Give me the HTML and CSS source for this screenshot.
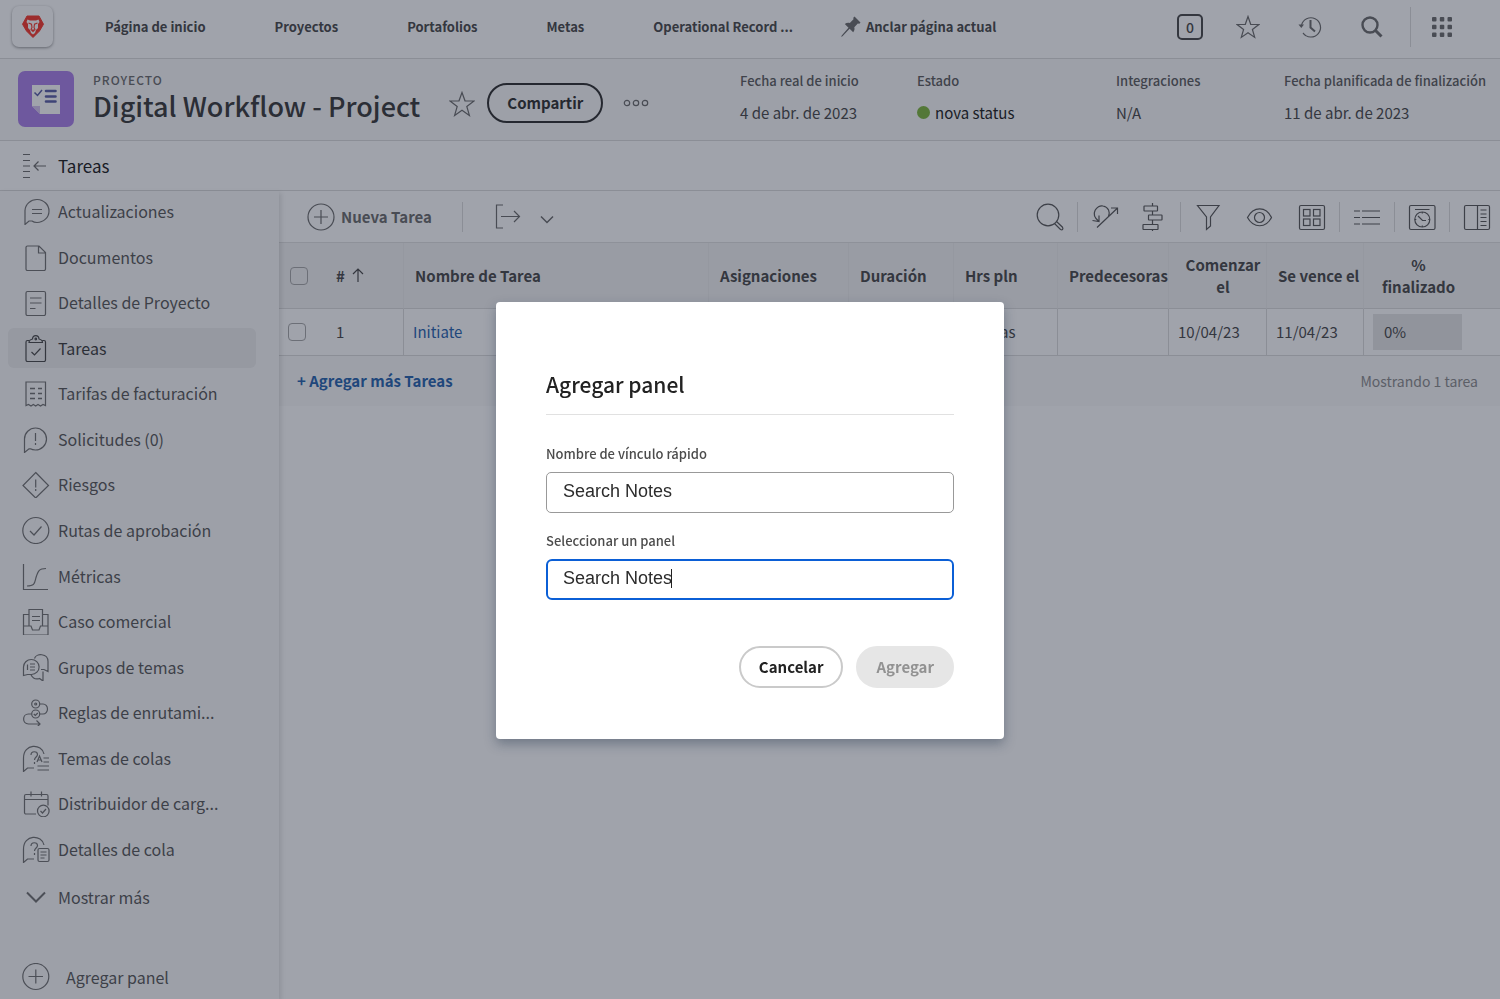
FILE: index.html
```html
<!DOCTYPE html>
<html lang="es">
<head>
<meta charset="utf-8">
<meta name="viewport" content="width=device-width, initial-scale=1">
<title>Digital Workflow - Project</title>
<link rel="stylesheet" href="styles.css">
</head>
<body>
<div class="app">
  <header class="topbar">
    <a class="brand" href="#" aria-label="Inicio">
      <svg width="24" height="25" viewBox="0 0 24 25"><path d="M6 2h12l4.500 8.200L18.500 17 12 23.500 5.500 17 1.500 10.200z" fill="#f93a2d" stroke="#f93a2d" stroke-linejoin="round"/><path d="M6.500 5.500 9 6.500h6l2.500-1 1 2.500-1.500 2v4l-2 2-1 3-2 1.500-2-1.500-1-3-2-2v-4L5.500 8z" fill="#fff"/><path d="M7.500 9l3 1.200.5 3.300-1 2M16.500 9l-3 1.200-.5 3.300 1 2M10.500 16h3l-1.500 1.500z" fill="none" stroke="#f93a2d" stroke-width="1.100"/></svg>
    </a>
    <nav class="mainnav">
      <a href="#">Página de inicio</a>
      <a href="#">Proyectos</a>
      <a href="#">Portafolios</a>
      <a href="#">Metas</a>
      <a href="#">Operational Record ...</a>
    </nav>
    <button class="pin" type="button">
      <svg width="20" height="22" viewBox="0 0 20 22"><path d="M13.500.5 19.500 6.500l-1.200 1.200-1.500-.3-3.500 3.800c.5 2 .2 3.500-1.100 5L8.600 12.800 1.500 20.300.2 21l.5-1.500L7.500 11.700 3.800 8c1.500-1.300 3.200-1.600 5-1.100l3.700-3.600-.2-1.500z" fill="currentColor"/></svg>
      <span>Anclar página actual</span>
    </button>
    <div class="tools">
      <button class="count" type="button">0</button>
      <button class="iconbtn" type="button" aria-label="Favoritos"><svg class="line" width="24" height="24" viewBox="0 0 24 24"><path d="M12 1.500l2.700 7.800 8.200.2-6.500 5 2.300 7.900L12 17.700l-6.700 4.700 2.300-7.900-6.500-5 8.200-.2z"/></svg></button>
      <button class="iconbtn" type="button" aria-label="Recientes"><svg class="line" width="24" height="24" viewBox="0 0 24 24"><path d="M3.500 10.500a9.600 9.600 0 1 1 1.600 7.500M5 18a9.600 9.600 0 0 0 3 2.800"/><path d="M.5 9.500h5.500l-2.700 3.500z" fill="currentColor" stroke="none"/><path d="M12.500 5v7.500l4.500 4" stroke-width="2"/></svg></button>
      <button class="iconbtn" type="button" aria-label="Buscar"><svg class="line" width="24" height="24" viewBox="0 0 24 24"><circle cx="10" cy="10" r="7.500" stroke-width="2.400"/><path d="M15.500 15.500l6 6" stroke-width="3"/></svg></button>
      <span class="split"></span>
      <button class="iconbtn" type="button" aria-label="Menú principal"><svg width="20" height="20" viewBox="0 0 20 20" fill="currentColor"><rect width="4.500" height="4.500" rx="1"/><rect x="7.800" width="4.500" height="4.500" rx="1"/><rect x="15.500" width="4.500" height="4.500" rx="1"/><rect y="7.800" width="4.500" height="4.500" rx="1"/><rect x="7.800" y="7.800" width="4.500" height="4.500" rx="1"/><rect x="15.500" y="7.800" width="4.500" height="4.500" rx="1"/><rect y="15.500" width="4.500" height="4.500" rx="1"/><rect x="7.800" y="15.500" width="4.500" height="4.500" rx="1"/><rect x="15.500" y="15.500" width="4.500" height="4.500" rx="1"/></svg></button>
    </div>
  </header>

  <section class="project">
    <svg class="tile" width="56" height="56" viewBox="0 0 56 56"><rect width="56" height="56" rx="7" fill="#ac82e9"/><path d="M14 14h28v29H22l-8-8z" fill="#fff"/><path d="M14 35h8v8z" fill="#d5c4ee"/><path d="M16.500 21.500l3 3 4.500-5.500" fill="none" stroke="#5d61a8" stroke-width="1.500"/><path d="M28 20h9.500M28 25.500h9.500M28 30.500h9.500" stroke="#5d61a8" stroke-width="2.600" stroke-linecap="round"/></svg>
    <div class="heading">
      <span class="kind">PROYECTO</span>
      <h1>Digital Workflow - Project</h1>
    </div>
    <button class="iconbtn" type="button" aria-label="Marcar como favorito"><svg class="line" width="26" height="26" viewBox="0 0 26 26"><path d="M13 1.500l3 8.300 9 .2-7.200 5.500 2.600 8.900L13 19.200l-7.400 5.200 2.600-8.900L1 10l9-.2z"/></svg></button>
    <button class="share" type="button">Compartir</button>
    <button class="iconbtn" type="button" aria-label="Más"><svg class="line" width="26" height="10" viewBox="0 0 26 10"><circle cx="4" cy="5" r="2.700"/><circle cx="13" cy="5" r="2.700"/><circle cx="22" cy="5" r="2.700"/></svg></button>
    <dl class="facts">
      <div><dt>Fecha real de inicio</dt><dd>4 de abr. de 2023</dd></div>
      <div><dt>Estado</dt><dd class="status"><i class="dot"></i>nova status</dd></div>
      <div><dt>Integraciones</dt><dd>N/A</dd></div>
      <div><dt>Fecha planificada de finalización</dt><dd>11 de abr. de 2023</dd></div>
    </dl>
  </section>

  <div class="crumb">
    <button class="iconbtn" type="button" aria-label="Contraer panel"><svg class="line" width="26" height="26" viewBox="0 0 26 26"><path d="M1 1.500h7M1 7.500h7M1 13h7M1 18.500h7M1 24.500h7M24 13H12M16.500 8.500 12 13l4.500 4.500"/></svg></button>
    <h2>Tareas</h2>
  </div>

  <div class="body">
    <aside class="side">
      <nav class="menu">
        <a href="#"><svg class="line" width="28" height="28" viewBox="0 0 28 28"><path d="M3 27.500V13.500a12 11.500 0 1 1 12 12c-2 0-3.500-.3-5-1.500H7z"/><path d="M10 12.500h10M10 16.500h10"/></svg>Actualizaciones</a>
        <a href="#"><svg class="line" width="28" height="28" viewBox="0 0 28 28"><path d="M5.500 3H17l6.500 6.500V26a1.500 1.500 0 0 1-1.500 1.500H5.500A1.500 1.500 0 0 1 4 26V4.500A1.500 1.500 0 0 1 5.500 3zM16.500 3v7h7"/></svg>Documentos</a>
        <a href="#"><svg class="line" width="28" height="28" viewBox="0 0 28 28"><rect x="4" y="3.500" width="19.500" height="24" rx="1.500"/><path d="M8 10h11.500M8 15h11.500M8 20.500h5.500"/></svg>Detalles de Proyecto</a>
        <a href="#" class="current"><svg class="line" width="28" height="28" viewBox="0 0 28 28"><path d="M7 6.500H5.500A1.500 1.500 0 0 0 4 8v18a1.500 1.500 0 0 0 1.500 1.500H22a1.500 1.500 0 0 0 1.500-1.500V8A1.500 1.500 0 0 0 22 6.500h-1.500M7 8.500c0-2 1.500-3 3.500-3.500.3-4.500 6.200-4.500 6.500 0 2 .5 3.500 1.500 3.500 3.500z"/><path d="M9.500 18l3 3 6-6.500" /><circle cx="13.800" cy="5" r=".8"/></svg>Tareas</a>
        <a href="#"><svg class="line" width="28" height="28" viewBox="0 0 28 28"><path d="M4 26.500V3h19.500v23.500l-2.500-1-2.500 1.500-2.500-1.500-2.300 1.500-2.400-1.500L9 27l-2.500-1.500z"/><path d="M8 9.500h5M16 9.500h4M8 14.500h5M16 14.500h4M8 19.500h5M16 19.500h4" stroke-width="1.500"/></svg>Tarifas de facturación</a>
        <a href="#"><svg class="line" width="28" height="28" viewBox="0 0 28 28"><path d="M2.500 27.500V14a11 11 0 1 1 11 11c-2 0-3.500-.2-5-1.200H7z"/><path d="M13.500 8v8M13.500 18v2"/></svg>Solicitudes (0)</a>
        <a href="#"><svg class="line" width="28" height="28" viewBox="0 0 28 28"><path d="M13.700 2.500 26.500 15.500 13.700 28 1 15.500z"/><path d="M13.700 9.500v8M13.700 19v2"/></svg>Riesgos</a>
        <a href="#"><svg class="line" width="28" height="28" viewBox="0 0 28 28"><circle cx="13.800" cy="14.500" r="13"/><path d="M8 15l4 4 7.500-8.500"/></svg>Rutas de aprobación</a>
        <a href="#"><svg class="line" width="28" height="28" viewBox="0 0 28 28"><path d="M1.500 2v25.500H26M5 24c8 0 7.500-3 9-8.500C16 9 17 6.500 24 6.500"/></svg>Métricas</a>
        <a href="#"><svg class="line" width="28" height="28" viewBox="0 0 28 28"><path d="M1.500 19h7.500l1.500 4h6.500l1.500-4H26v9H1.500zM1.500 19V7.500H7M26 19V7.500h-5.500M7 18.500v-16h13.500v16M10 9.500h8M10 13.500h8"/></svg>Caso comercial</a>
        <a href="#"><svg class="line" width="28" height="28" viewBox="0 0 28 28"><path d="M1.500 22.500V14a7.800 7.500 0 1 1 8 7.500H5.500z"/><path d="M5.500 11.500v5.500M8 11h5M8 14h5M8 17h5M12.500 5.500C14 0 26 0 26 8.500v10L22 16.500h-3M9 22c2 3.500 5.500 4.500 8.500 3.500L21 28v-9.500"/></svg>Grupos de temas</a>
        <a href="#"><svg class="line" width="28" height="28" viewBox="0 0 28 28"><circle cx="13.700" cy="6" r="4"/><circle cx="13.700" cy="6" r="1"/><circle cx="13.700" cy="16" r="4"/><path d="M18 6h3a4.500 5 0 0 1 0 10h-3M9.500 16H6.500c-6.500 0-6.500 10 0 10H18M14.500 22.500 18 26l-3.500 3.500M11.800 16l1.500 1.500 2.500-2.500"/></svg>Reglas de enrutami...</a>
        <a href="#"><svg class="line" width="28" height="28" viewBox="0 0 28 28"><path d="M12 24H8.500L5.500 24l-4 3.500V14c0-15 18.500-14.500 20.500-4M9 11c0-4.500 6.500-4 6.500-.5 0 2.500-3 2.500-3 5.500M12.500 18v2M15 18l2.500-6 2.500 6M16 16h3M21.500 14H27M21.500 18H27M15.500 22H27M15.500 26H27"/></svg>Temas de colas</a>
        <a href="#"><svg class="line" width="28" height="28" viewBox="0 0 28 28"><path d="M14 25H4a1.500 1.500 0 0 1-1.500-1.500V7A1.500 1.500 0 0 1 4 5.500h20.500A1.500 1.500 0 0 1 26 7v9.500M2.500 10.500H26M9 2.500v5M19.500 2.500v5"/><circle cx="21.300" cy="22" r="5.800"/><path d="M18.500 22l2 2 3.500-4"/></svg>Distribuidor de carg...</a>
        <a href="#"><svg class="line" width="28" height="28" viewBox="0 0 28 28"><path d="M12 24H8.500L5.500 24l-4 3.500V14c0-15 18.500-14.500 20.500-4M9 11c0-4.500 6.500-4 6.500-.5 0 2.500-3 2.500-3 5.500M12.500 18v2"/><rect x="16" y="13.500" width="11" height="13" rx="1.500"/><path d="M18.500 17h6M18.500 20h6M18.500 23h4"/></svg>Detalles de cola</a>
      </nav>
      <button class="more" type="button"><svg class="line" width="28" height="28" viewBox="0 0 28 28"><path d="M5 9.500l9 9 9-9" stroke-width="2"/></svg>Mostrar más</button>
      <button class="more add" type="button"><svg class="line" width="28" height="28" viewBox="0 0 28 28"><circle cx="13.800" cy="13.500" r="13"/><path d="M13.800 6.500v14M6.500 13.500h14.500"/></svg>Agregar panel</button>
    </aside>

    <main class="content">
      <div class="toolbar">
        <button class="new" type="button"><svg class="line" width="28" height="28" viewBox="0 0 28 28"><circle cx="14" cy="14" r="13"/><path d="M14 7v14M7 14h14"/></svg>Nueva Tarea</button>
        <span class="split"></span>
        <button class="iconbtn export" type="button" aria-label="Exportar"><svg class="line" width="28" height="28" viewBox="0 0 28 28"><path d="M9 2H2.500v23H9M7 13.500h18.500M20 8l5.500 5.500L20 19"/></svg><svg class="line" width="14" height="28" viewBox="0 0 14 28"><path d="M1 13.500l6 6 6-6" stroke-width="1.500"/></svg></button>
        <div class="views">
          <button class="iconbtn" type="button" aria-label="Buscar"><svg class="line" width="28" height="28" viewBox="0 0 28 28"><circle cx="12" cy="12" r="10.800"/><path d="M18.500 20.500l6 6c2 1 3-.5 2-2.300l-6-5.700"/></svg></button>
          <span class="split"></span>
          <button class="iconbtn" type="button" aria-label="Actualizar estado"><svg class="line" width="28" height="28" viewBox="0 0 28 28"><path d="M6 24.500 26 5.500M20 5h6.500v6M7.500 18C-1.500 11 6 1.500 12 3c5.500 1 7.500 6 5.500 10.500M1.500 17.500l6.500 1V12.500"/></svg></button>
          <button class="iconbtn wide" type="button" aria-label="Gráfico de Gantt"><svg class="line" width="28" height="28" viewBox="0 0 28 28"><rect x="5" y="3" width="13.500" height="5" rx=".5"/><rect x="9.500" y="12" width="13.500" height="5" rx=".5"/><rect x="4" y="21.500" width="15" height="5" rx=".5"/><path d="M13.500 0v3M13.500 8v4M13.500 17v4.500M13.500 26.500v1.500"/></svg></button>
          <span class="split"></span>
          <button class="iconbtn" type="button" aria-label="Filtro"><svg class="line" width="28" height="28" viewBox="0 0 28 28"><path d="M3.500 2.500h21.500L16.500 14v9l-4 3.500V14z"/></svg></button>
          <button class="iconbtn wider" type="button" aria-label="Vista"><svg class="line" width="28" height="28" viewBox="0 0 28 28"><path d="M1.500 14.500c6-11.500 18.500-11.500 24 0-5.500 11-18 11-24 0z"/><circle cx="13.500" cy="14.500" r="5"/></svg></button>
          <button class="iconbtn wider" type="button" aria-label="Agrupación"><svg class="line" width="28" height="28" viewBox="0 0 28 28"><rect x="1.500" y="2.500" width="25" height="24" rx="1.500"/><rect x="5.500" y="6.500" width="6.500" height="6.500"/><rect x="15.500" y="6.500" width="6.500" height="6.500"/><rect x="5.500" y="16" width="6.500" height="6.500"/><rect x="15.500" y="16" width="6.500" height="6.500"/></svg></button>
          <span class="split"></span>
          <button class="iconbtn" type="button" aria-label="Lista"><svg class="line" width="28" height="28" viewBox="0 0 28 28"><path d="M1 8h6M9 8h18M1 14.500h6M9 14.500h18M1 21h6M9 21h18"/></svg></button>
          <span class="split"></span>
          <button class="iconbtn" type="button" aria-label="Cronología"><svg class="line" width="28" height="28" viewBox="0 0 28 28"><rect x="1.500" y="2.500" width="25.500" height="24" rx="1.500"/><path d="M7 6.500h14.500M10 13l4.500 4.500H18"/><circle cx="14.300" cy="16.500" r="7.500"/><path d="M14.300 9v1.500M14.300 22.500V24M6.800 16.500h1.500M20.300 16.500h1.500"/></svg></button>
          <span class="split"></span>
          <button class="iconbtn" type="button" aria-label="Resumen"><svg class="line" width="28" height="28" viewBox="0 0 28 28"><rect x="1.500" y="2.500" width="25" height="24" rx="1.500"/><path d="M14.500 2.500v24M17.500 7h6M17.500 11h6M17.500 14.500h6M17.500 18.500h6M17.500 22.500h6"/></svg></button>
        </div>
      </div>

      <table class="tasks">
        <colgroup><col class="c-check"><col class="c-num"><col><col class="c-asg"><col class="c-dur"><col class="c-hrs"><col class="c-pred"><col class="c-start"><col class="c-due"><col class="c-pct"></colgroup>
        <thead>
          <tr>
            <th class="pick"><input type="checkbox" aria-label="Seleccionar todo"></th>
            <th class="num">#<svg class="line sort" width="12" height="14" viewBox="0 0 12 14"><path d="M6 14V1M1 6l5-5 5 5"/></svg></th>
            <th>Nombre de Tarea</th><th>Asignaciones</th><th>Duración</th><th>Hrs pln</th><th>Predecesoras</th>
            <th class="mid">Comenzar el</th><th>Se vence el</th><th class="mid pct">% finalizado</th>
          </tr>
        </thead>
        <tbody>
          <tr>
            <td class="pick"><input type="checkbox" aria-label="Seleccionar Initiate"></td>
            <td class="num">1</td>
            <td><a href="#">Initiate</a></td><td></td><td></td><td>8 Horas</td><td></td>
            <td>10/04/23</td><td>11/04/23</td><td class="pct"><div class="meter">0%</div></td>
          </tr>
        </tbody>
      </table>
      <div class="tablefoot">
        <a href="#">+ Agregar más Tareas</a>
        <span>Mostrando 1 tarea</span>
      </div>
    </main>
  </div>
</div>

<div class="backdrop">
  <form class="dialog" role="dialog" aria-modal="true" aria-labelledby="dialog-title">
    <h3 id="dialog-title">Agregar panel</h3>
    <label for="link-name">Nombre de vínculo rápido</label>
    <div class="field"><input id="link-name" type="text" value="Search Notes"></div>
    <label for="panel-name">Seleccionar un panel</label>
    <div class="field active"><input id="panel-name" type="text" value="Search Notes"><i class="caret"></i></div>
    <div class="actions">
      <button class="cancel" type="button">Cancelar</button>
      <button class="submit" type="submit" disabled>Agregar</button>
    </div>
  </form>
</div>
</body>
</html>
```
FILE: styles.css
```css
* { box-sizing: border-box; }

body {
  margin: 0;
  background: #fff;
  color: #4b4b4b;
  font: 16px/22px "Noto Sans CJK SC", "Noto Sans", sans-serif;
}

h1, h2, h3, dl, dd { margin: 0; font-weight: 500; }
a { color: inherit; text-decoration: none; }
button { margin: 0; padding: 0; border: 0; background: none; color: inherit; font: inherit; }
svg { display: block; flex: none; }
.line { fill: none; stroke: currentColor; stroke-width: 1.2; }
.iconbtn { display: flex; color: #6e6e6e; }
.split { width: 1px; background: #dcdcdc; }

.app { display: flex; flex-direction: column; min-height: 100vh; }

.topbar {
  display: flex;
  align-items: center;
  height: 59px;
  padding: 0 48px 5px 12px;
  border-bottom: 1px solid #dcdcdc;
  font-size: 13px;
  font-weight: 700;
}
.brand {
  display: grid;
  place-items: center;
  width: 41px;
  height: 41px;
  border-radius: 7px;
  box-shadow: 0 1px 3px rgba(0, 0, 0, .4);
}
.mainnav { display: flex; gap: 69px; margin-left: 52px; white-space: nowrap; }
.pin { display: flex; align-items: center; gap: 5px; margin-left: 48px; white-space: nowrap; }
.pin svg { color: #6e6e6e; }
.tools { display: flex; align-items: center; margin-left: auto; }
.tools .iconbtn { margin-left: 38px; }
.tools .count + .iconbtn { margin-left: 33px; }
.tools .split { height: 40px; margin-left: 26px; }
.tools .split + .iconbtn { margin-left: 21px; }
.count { width: 26px; height: 26px; border: 2px solid #4b4b4b; border-radius: 5px; font-size: 14px; line-height: 20px; font-weight: 500; }

.project {
  display: flex;
  align-items: center;
  height: 82px;
  padding: 0 14px 1px 18px;
  border-bottom: 1px solid #dcdcdc;
  background: #fafafa;
}
.heading { margin: 0 0 0 19px; white-space: nowrap; }
.kind { display: block; font-size: 12px; line-height: 14px; font-weight: 500; letter-spacing: 1px; color: #6e6e6e; }
h1 { font-size: 27px; line-height: 38px; font-weight: 500; color: #3c3c3c; }
.project > .iconbtn { margin: 10px 0 0 29px; }
.share { height: 40px; margin: 8px 0 0 12px; padding: 0 18px; border: 2px solid #323232; border-radius: 20px; font-size: 15px; font-weight: 700; color: #323232; }
.project > .share + .iconbtn { margin: 8px 0 0 20px; }
.facts { display: grid; grid-template-columns: 177px 199px 168px auto; margin: 0 0 5px auto; white-space: nowrap; }
.facts dt { font-size: 13px; color: #5f5f5f; }
.facts dd { margin-top: 10px; font-size: 15px; font-weight: 400; }
.status { display: flex; align-items: center; gap: 5px; color: #222; }
.dot { width: 13px; height: 13px; border-radius: 50%; background: #80b840; }

.crumb {
  display: flex;
  align-items: center;
  gap: 10px;
  height: 50px;
  padding-left: 22px;
  border-bottom: 1px solid #dcdcdc;
}
h2 { font-size: 17px; font-weight: 400; color: #222; }

.body { display: flex; flex: 1; }
.side {
  position: relative;
  display: flex;
  flex-direction: column;
  flex: none;
  width: 279px;
  padding: 0 23px 2px 8px;
  background: #fafafa;
  box-shadow: 2px 2px 5px rgba(0, 0, 0, .12);
  color: #5a5a5a;
}
.menu { display: flex; flex: 1; flex-direction: column; justify-content: space-between; }
.menu a, .more { display: flex; align-items: center; gap: 8px; height: 40px; padding-left: 14px; border-radius: 6px; white-space: nowrap; }
.menu svg, .more svg { color: #747474; }
.menu .current { background: #eee; color: #3f3f3f; }
.menu .current svg { color: #4b4b4b; }
.more { margin-top: 8px; }
.add { gap: 16px; margin-top: 40px; }

.content { flex: 1; min-width: 0; }
.toolbar { display: flex; align-items: center; height: 52px; padding: 0 9px 0 28px; border-bottom: 1px solid #e1e1e1; }
.toolbar .split { height: 30px; }
.new { display: flex; align-items: center; gap: 6px; color: #6e6e6e; font-size: 15px; font-weight: 700; }
.new + .split { margin-left: 30px; }
.export { gap: 18px; margin-left: 31px; }
.views { display: flex; align-items: center; gap: 13px; margin-left: auto; }
.views .wide { margin-left: 7px; }
.views .wider { margin-left: 11px; }
.views .iconbtn { color: #5a5a5a; }

.tasks { width: 100%; table-layout: fixed; border-spacing: 0; font-size: 15px; }
.c-check { width: 40px; }
.c-num { width: 85px; }
.c-asg { width: 140px; }
.c-dur { width: 105px; }
.c-hrs { width: 104px; }
.c-pred { width: 111px; }
.c-start { width: 98px; }
.c-due { width: 97px; }
.c-pct { width: 136px; }
.tasks th { height: 66px; padding: 0 0 0 11px; border-right: 1px solid #ededed; border-bottom: 1px solid #dcdcdc; background: #f4f4f4; text-align: left; font-size: 15px; font-weight: 700; }
.tasks td { height: 47px; padding: 0 0 0 9px; border-right: 1px solid #dcdcdc; border-bottom: 1px solid #dcdcdc; }
.tasks .pick { border-right: 0; }
.tasks .mid { text-align: center; }
.tasks .num { padding-left: 17px; }
.tasks .pct { padding-right: 38px; border-right: 0; }
.sort { display: inline-block; margin-left: 7px; }
.tasks a, .tablefoot a { color: #2a66b0; }
.tasks input { display: block; width: 18px; height: 18px; margin: 0; border: 1px solid #a8a8a8; border-radius: 4px; appearance: none; }
.meter { height: 36px; padding-left: 11px; background: #e6e6e6; line-height: 36px; }
.tablefoot { display: flex; align-items: center; justify-content: space-between; height: 50px; padding: 0 22px 0 18px; background: #fafafa; }
.tablefoot a { font-size: 15px; font-weight: 700; }
.tablefoot span { font-size: 14px; color: #8e8e8e; }

.backdrop {
  position: fixed;
  inset: 0;
  display: grid;
  place-items: center;
  padding-top: 42px;
  background: rgba(17, 25, 45, .4);
}
.dialog {
  display: flex;
  flex-direction: column;
  width: 508px;
  padding: 66px 50px 51px;
  border-radius: 4px;
  background: #fff;
  box-shadow: 0 5px 12px rgba(20, 40, 65, .35);
}
h3 { padding-bottom: 14px; margin-bottom: 28px; border-bottom: 1px solid #e1e1e1; font-size: 21px; line-height: 32px; color: #222; }
.dialog label { font-size: 13px; font-weight: 500; }
.field { position: relative; margin: 7px 0 17px; }
.field input { display: block; width: 100%; height: 41px; padding: 0 16px 3px; border: 1px solid #999; border-radius: 5px; outline: 0; background: #fff; color: #2c2c2c; font: 18px "Liberation Sans", sans-serif; }
.field.active { margin-bottom: 46px; }
.field.active input { padding: 0 15px 3px; border: 2px solid #0b5fd6; border-radius: 6px; }
.caret { position: absolute; top: 10px; left: 125px; width: 1px; height: 19px; background: #222; }
.actions { display: flex; justify-content: flex-end; gap: 13px; }
.actions button { height: 42px; padding: 0 18px; border: 2px solid #cacaca; border-radius: 21px; font-size: 15px; font-weight: 700; color: #222; }
.actions .submit { border-color: #e6e6e6; background: #e6e6e6; color: #929292; }
```
